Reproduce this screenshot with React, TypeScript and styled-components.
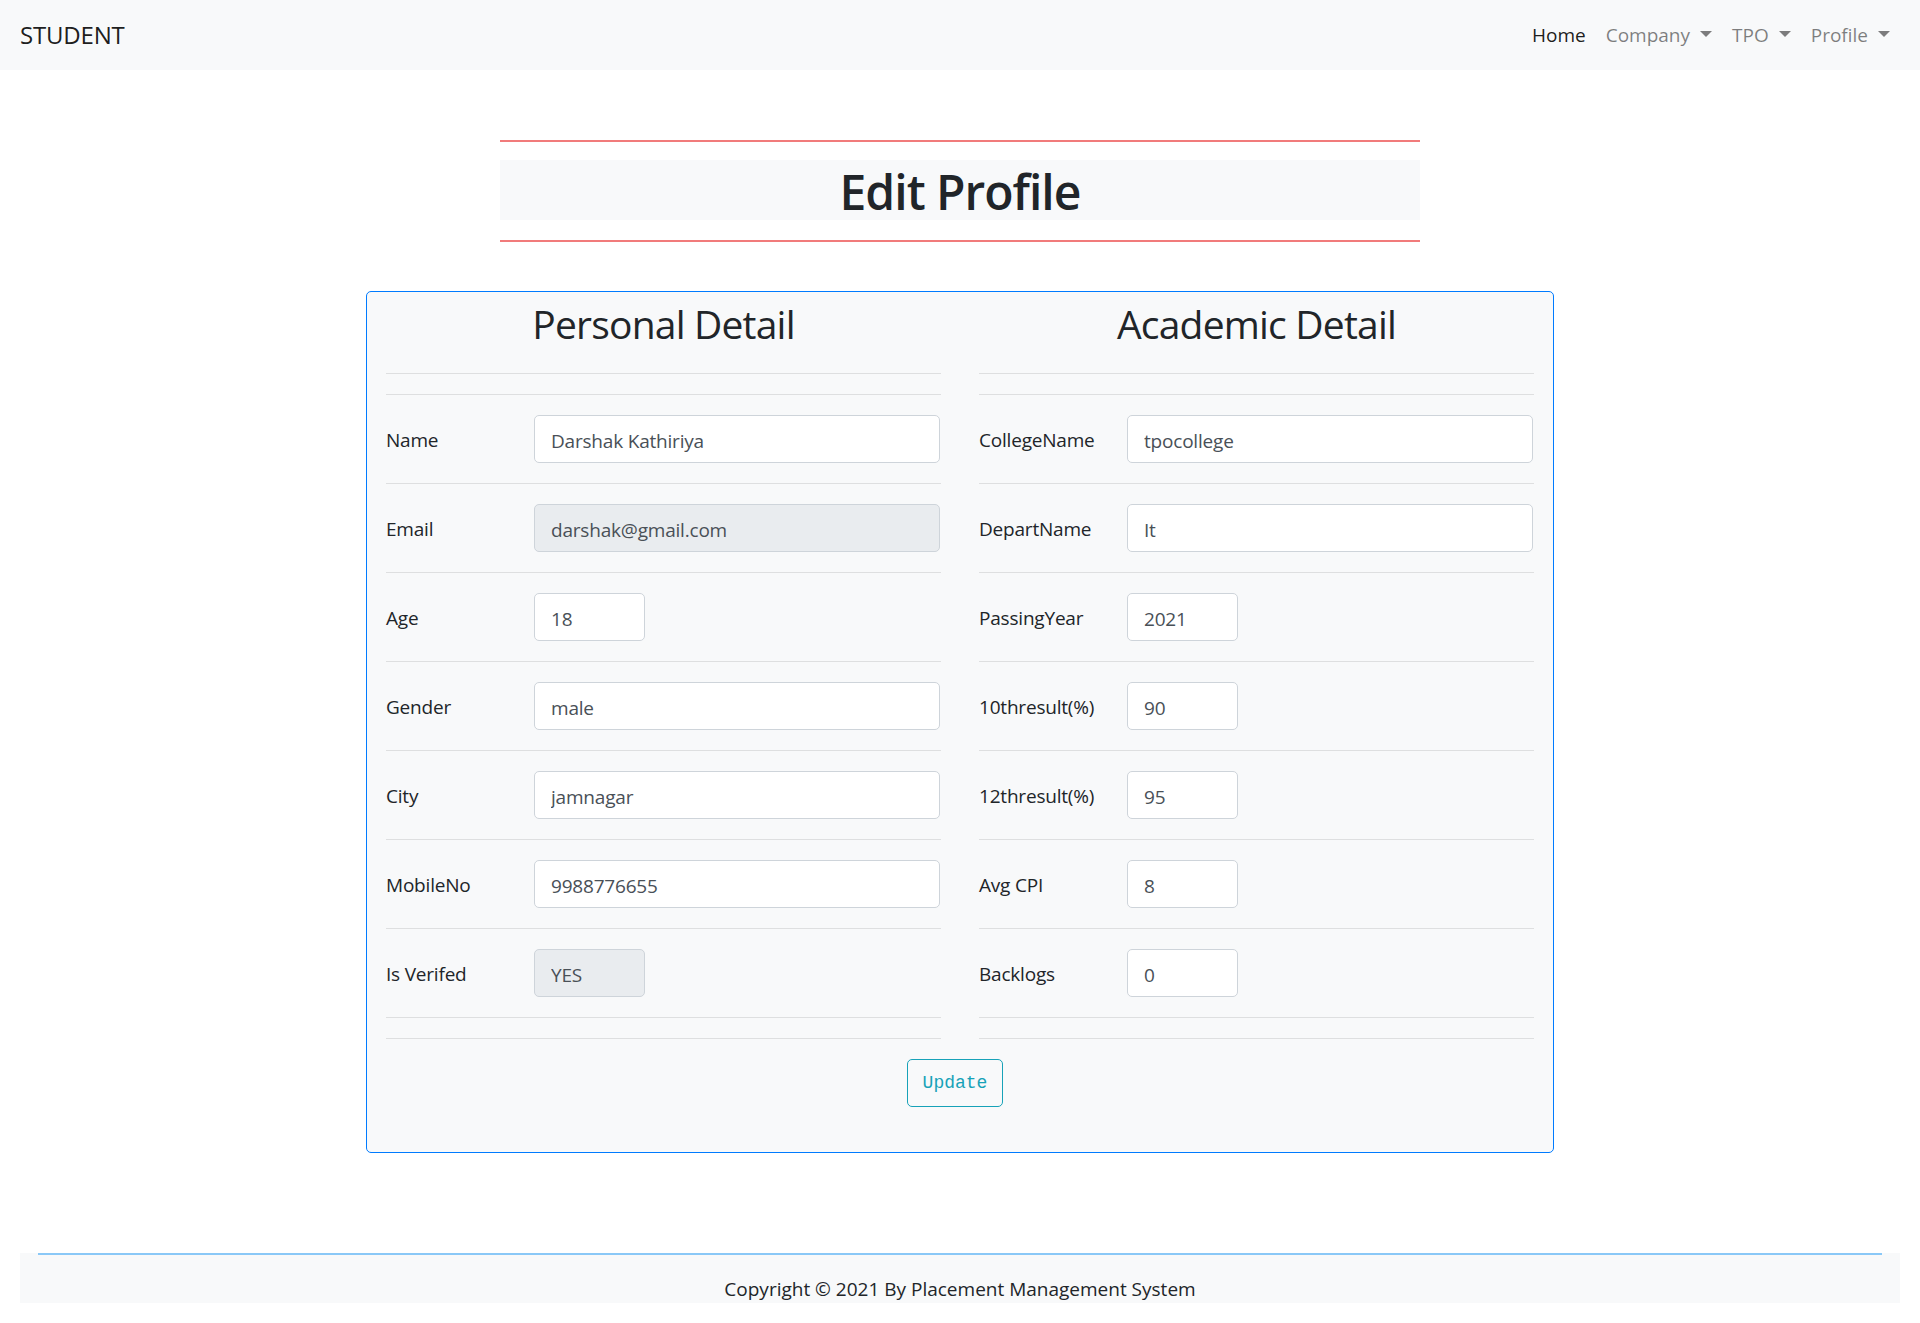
import React from "react";
import styled, { createGlobalStyle } from "styled-components";

type Field = {
  label: string;
  value: string;
  small?: boolean;
  disabled?: boolean;
};

const personal: Field[] = [
  { label: "Name", value: "Darshak Kathiriya" },
  { label: "Email", value: "darshak@gmail.com", disabled: true },
  { label: "Age", value: "18", small: true },
  { label: "Gender", value: "male" },
  { label: "City", value: "jamnagar" },
  { label: "MobileNo", value: "9988776655" },
  { label: "Is Verifed", value: "YES", small: true, disabled: true },
];

const academic: Field[] = [
  { label: "CollegeName", value: "tpocollege" },
  { label: "DepartName", value: "It" },
  { label: "PassingYear", value: "2021", small: true },
  { label: "10thresult(%)", value: "90", small: true },
  { label: "12thresult(%)", value: "95", small: true },
  { label: "Avg CPI", value: "8", small: true },
  { label: "Backlogs", value: "0", small: true },
];

const DetailColumn = ({ title, fields }: { title: string; fields: Field[] }) => (
  <Column>
    <ColumnTitle>{title}</ColumnTitle>
    <Rule />
    <Rule />
    {fields.map((f) => (
      <React.Fragment key={f.label}>
        <FieldRow>
          <FieldLabel>{f.label}</FieldLabel>
          <FieldInput
            value={f.value}
            readOnly
            disabled={f.disabled}
            $small={f.small}
          />
        </FieldRow>
        <Rule />
      </React.Fragment>
    ))}
    <Rule />
  </Column>
);

const App = () => {
  return (
    <>
      <GlobalStyle />
      <Navbar>
        <Brand>STUDENT</Brand>
        <NavList>
          <NavLink $active>Home</NavLink>
          <NavLink>
            Company<Caret />
          </NavLink>
          <NavLink>
            TPO<Caret />
          </NavLink>
          <NavLink>
            Profile<Caret />
          </NavLink>
        </NavList>
      </Navbar>

      <Header>
        <RedRule />
        <PageTitle>Edit Profile</PageTitle>
        <RedRule />
      </Header>

      <Card>
        <Columns>
          <DetailColumn title="Personal Detail" fields={personal} />
          <DetailColumn title="Academic Detail" fields={academic} />
        </Columns>
        <Actions>
          <UpdateButton type="button">Update</UpdateButton>
        </Actions>
      </Card>

      <Footer>
        <FooterRule />
        <FooterText>Copyright © 2021 By Placement Management System</FooterText>
      </Footer>
    </>
  );
};

export default App;

const GlobalStyle = createGlobalStyle`
  body {
    margin: 0;
    background: #fff;
    color: #212529;
    font-family: "Open Sans", "Noto Sans", Arial, sans-serif;
    font-size: 20px;
    line-height: 1.5;
  }
  * { box-sizing: border-box; }
`;

const Navbar = styled.nav`
  display: flex;
  align-items: center;
  justify-content: space-between;
  height: 70px;
  padding: 0 20px;
  background: #f8f9fa;
`;

const Brand = styled.span`
  font-size: 24px;
  letter-spacing: -0.2px;
  color: rgba(0, 0, 0, 0.9);
`;

const NavList = styled.div`
  display: flex;
  align-items: center;
`;

const NavLink = styled.span<{ $active?: boolean }>`
  display: flex;
  align-items: center;
  padding: 0 10px;
  font-size: 19px;
  color: ${({ $active }) => ($active ? "rgba(0,0,0,0.9)" : "rgba(0,0,0,0.5)")};
`;

const Caret = styled.span`
  display: inline-block;
  margin-left: 10px;
  margin-top: -2px;
  border-top: 6px solid;
  border-left: 6px solid transparent;
  border-right: 6px solid transparent;
`;

const Header = styled.div`
  width: 920px;
  margin: 70px auto 0;
`;

const RedRule = styled.div`
  height: 2px;
  background: #f17b7b;
`;

const PageTitle = styled.h1`
  margin: 18px 0 20px;
  padding-top: 3px;
  height: 60px;
  background: #f8f9fa;
  text-align: center;
  font-size: 48px;
  font-weight: 600;
  line-height: 57px;
  letter-spacing: -1px;
  color: #212529;
`;

const Card = styled.div`
  width: 1188px;
  margin: 49px auto 0;
  padding: 8px 19px 45px;
  background: #f8f9fa;
  border: 1px solid #007bff;
  border-radius: 5px;
`;

const Columns = styled.div`
  display: grid;
  grid-template-columns: 1fr 1fr;
  column-gap: 38px;
`;

const Column = styled.div``;

const ColumnTitle = styled.h2`
  margin: 0 0 25px;
  text-align: center;
  font-size: 39px;
  font-weight: 400;
  line-height: 48px;
  letter-spacing: -0.8px;
  color: #212529;
`;

const Rule = styled.hr`
  margin: 20px 0;
  border: 0;
  border-top: 1px solid rgba(0, 0, 0, 0.1);
`;

const FieldRow = styled.div`
  display: flex;
  align-items: center;
  height: 48px;
`;

const FieldLabel = styled.label`
  width: 148px;
  flex-shrink: 0;
  padding-top: 3px;
  font-size: 19px;
  letter-spacing: -0.2px;
  color: #212529;
`;

const FieldInput = styled.input<{ $small?: boolean }>`
  width: ${({ $small }) => ($small ? "111px" : "406px")};
  height: 48px;
  padding: 3px 16px 0;
  font-family: inherit;
  font-size: 19px;
  letter-spacing: -0.2px;
  color: #495057;
  background: #fff;
  border: 1px solid #ced4da;
  border-radius: 5px;
  outline: none;

  &:disabled {
    background: #e9ecef;
    color: #495057;
    opacity: 1;
  }
`;

const Actions = styled.div`
  display: flex;
  justify-content: center;
  padding-right: 10px;
`;

const UpdateButton = styled.button`
  height: 48px;
  padding: 0 15px;
  font-family: "Liberation Mono", "DejaVu Sans Mono", monospace;
  font-size: 18px;
  color: #17a2b8;
  background: transparent;
  border: 1px solid #17a2b8;
  border-radius: 5px;
  cursor: pointer;
`;

const Footer = styled.footer`
  margin: 100px 20px 20px;
  height: 50px;
  background: #f8f9fa;
`;

const FooterRule = styled.div`
  margin: 0 18px;
  height: 2px;
  background: #8ac8f7;
`;

const FooterText = styled.div`
  padding-top: 19px;
  text-align: center;
  font-size: 19px;
  line-height: 30px;
  color: #212529;
`;
